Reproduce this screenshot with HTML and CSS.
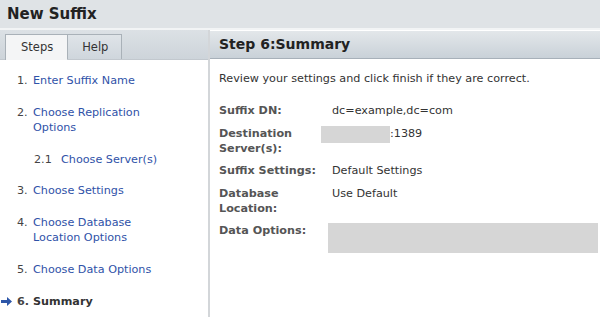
FILE: index.html
```html
<!DOCTYPE html>
<html lang="en">
<head>
  <meta charset="UTF-8" />
  <meta name="viewport" content="width=device-width, initial-scale=1" />
  <title>New Suffix</title>
  <link rel="stylesheet" href="styles.css">
</head>
<body>
  <div class="titlebar">New Suffix</div>
  <div class="main">
    <aside class="sidebar">
      <div class="tabs">
        <span class="tab active">Steps</span>
        <span class="tab">Help</span>
      </div>
      <ol class="steps">
        <li class="step"><span class="num">1.</span><a href="#">Enter Suffix Name</a></li>
        <li class="step"><span class="num">2.</span><a href="#">Choose Replication<br>Options</a></li>
        <li class="step sub"><span class="num">2.1</span><a href="#">Choose Server(s)</a></li>
        <li class="step"><span class="num">3.</span><a href="#">Choose Settings</a></li>
        <li class="step"><span class="num">4.</span><a href="#">Choose Database<br>Location Options</a></li>
        <li class="step"><span class="num">5.</span><a href="#">Choose Data Options</a></li>
        <li class="step current">
          <svg class="arrow" width="11" height="9" viewBox="0 0 11 9"><path d="M0 3h6V0l5 4.5-5 4.5V6H0z" fill="#2d56a8"/></svg>
          <span class="num">6.</span><span>Summary</span>
        </li>
      </ol>
    </aside>
    <section class="content">
      <h2 class="header">Step 6:Summary</h2>
      <p class="intro">Review your settings and click finish if they are correct.</p>
      <div class="summary">
        <div class="label">Suffix DN:</div>
        <div class="value">dc=example,dc=com</div>
        <div class="label">Destination<br>Server(s):</div>
        <div class="value"><span class="redact host"></span>:1389</div>
        <div class="label">Suffix Settings:</div>
        <div class="value">Default Settings</div>
        <div class="label">Database<br>Location:</div>
        <div class="value">Use Default</div>
        <div class="label">Data Options:</div>
        <div class="value"><span class="redact data"></span></div>
      </div>
    </section>
  </div>
</body>
</html>
```
FILE: styles.css
```css
body { margin: 0; font-family: "DejaVu Sans", sans-serif; font-size: 11.2px; color: #333; background: #fff; width: 600px; height: 317px; overflow: hidden; }
.titlebar { height: 28px; line-height: 28px; padding-left: 7px; font-size: 15px; font-weight: bold; color: #222; background: #dfe3e6; border-bottom: 2px solid #f2f4f5; }
.main { display: flex; height: 287px; }
.sidebar { width: 208px; border-right: 2px solid #d3d6d9; flex-shrink: 0; }
.tabs { height: 30px; display: flex; align-items: flex-end; padding-left: 5px; background: linear-gradient(#dce1e5, #cdd4da); border-bottom: 1px solid #c2c8ce; box-sizing: border-box; }
.tab { height: 24px; line-height: 24px; padding: 0 13px 0 14px; border: 1px solid #a9b1b8; border-bottom: none; background: linear-gradient(#dfe4e8, #cfd6dc); color: #333; font-size: 11.5px; }
.tab.active { background: #f4f5f6; padding: 0 14px 0 15px; border-right: none; height: 25px; margin-bottom: -1px; }
.steps { list-style: none; margin: 0; padding: 13px 0 0 17px; }
.step { display: flex; line-height: 15px; margin-bottom: 16.8px; }
.step .num { width: 16px; flex-shrink: 0; color: #444; }
.step a { color: #2f52a8; text-decoration: none; }
.step.sub { padding-left: 17px; }
.step.sub .num { width: 27px; }
.step.current { font-weight: bold; color: #333; position: relative; }
.arrow { position: absolute; left: -16px; top: 3px; }
.content { flex: 1; }
.header { margin: 0; height: 28px; line-height: 27px; padding-left: 9px; font-size: 14px; font-weight: bold; color: #222; background: linear-gradient(#e3e7ea, #c9d1d8); border-bottom: 1px solid #a7b0b9; box-sizing: border-box; margin-top: 1px; }
.intro { margin: 12px 0 0 9px; line-height: 15px; }
.summary { display: grid; grid-template-columns: 113px 1fr; row-gap: 7.6px; margin: 17px 0 0 9px; line-height: 15px; }
.label { font-weight: bold; color: #555; }
.value { color: #333; }
.redact { display: inline-block; background: #d6d6d6; vertical-align: top; }
.redact.host { width: 69px; height: 17px; margin-left: -11px; }
.redact.data { width: 270px; height: 30px; margin-left: -4px; }
```
